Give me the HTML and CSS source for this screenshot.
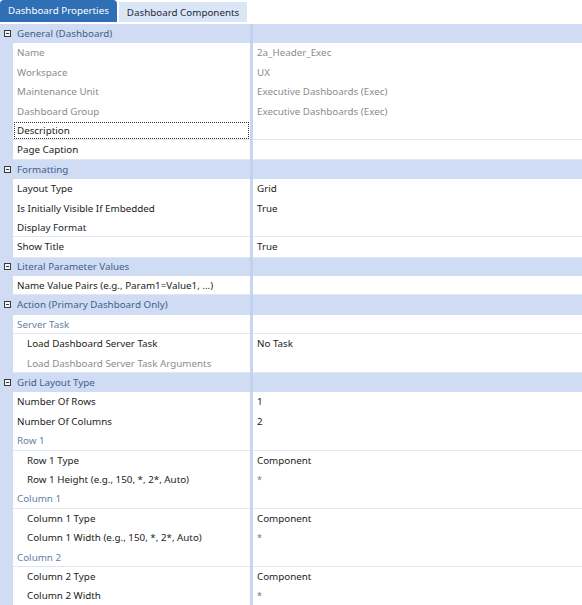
FILE: index.html
```html
<!DOCTYPE html>
<html lang="en">
<head>
    <meta charset="UTF-8">
    <meta name="viewport" content="width=device-width, initial-scale=1.0">
    <title>Dashboard Properties</title>
    <!-- STYLING -->
    <link rel="stylesheet" href="styles.css">
</head>
<body>
    <div class="tab-bar">
        <div class="tab active">Dashboard Properties</div>
        <div class="tab">Dashboard Components</div>
    </div>

    <div class="prop-grid">
        <!-- General -->
        <div class="cat"><span class="toggle"></span><span class="cat-name">General (Dashboard)</span><span class="split"></span><span></span></div>
        <div class="row ro"><span class="name">Name</span><span class="split"></span><span class="value">2a_Header_Exec</span></div>
        <div class="row ro"><span class="name">Workspace</span><span class="split"></span><span class="value">UX</span></div>
        <div class="row ro"><span class="name">Maintenance Unit</span><span class="split"></span><span class="value">Executive Dashboards (Exec)</span></div>
        <div class="row ro"><span class="name">Dashboard Group</span><span class="split"></span><span class="value">Executive Dashboards (Exec)</span></div>
        <div class="row"><span class="name focus">Description</span><span class="split"></span><span class="value"></span></div>
        <div class="row"><span class="name">Page Caption</span><span class="split"></span><span class="value"></span></div>

        <!-- Formatting -->
        <div class="cat"><span class="toggle"></span><span class="cat-name">Formatting</span><span class="split"></span><span></span></div>
        <div class="row"><span class="name">Layout Type</span><span class="split"></span><span class="value">Grid</span></div>
        <div class="row"><span class="name">Is Initially Visible If Embedded</span><span class="split"></span><span class="value">True</span></div>
        <div class="row"><span class="name">Display Format</span><span class="split"></span><span class="value"></span></div>
        <div class="row"><span class="name">Show Title</span><span class="split"></span><span class="value">True</span></div>

        <!-- Literal Parameter Values -->
        <div class="cat"><span class="toggle"></span><span class="cat-name">Literal Parameter Values</span><span class="split"></span><span></span></div>
        <div class="row"><span class="name">Name Value Pairs (e.g., Param1=Value1, ...)</span><span class="split"></span><span class="value"></span></div>

        <!-- Action -->
        <div class="cat"><span class="toggle"></span><span class="cat-name">Action (Primary Dashboard Only)</span><span class="split"></span><span></span></div>
        <div class="row sub"><span class="name">Server Task</span><span class="split"></span><span class="value"></span></div>
        <div class="row indent"><span class="name">Load Dashboard Server Task</span><span class="split"></span><span class="value">No Task</span></div>
        <div class="row indent ro"><span class="name">Load Dashboard Server Task Arguments</span><span class="split"></span><span class="value"></span></div>

        <!-- Grid Layout Type -->
        <div class="cat"><span class="toggle"></span><span class="cat-name">Grid Layout Type</span><span class="split"></span><span></span></div>
        <div class="row"><span class="name">Number Of Rows</span><span class="split"></span><span class="value">1</span></div>
        <div class="row"><span class="name">Number Of Columns</span><span class="split"></span><span class="value">2</span></div>
        <div class="row sub"><span class="name">Row 1</span><span class="split"></span><span class="value"></span></div>
        <div class="row indent"><span class="name">Row 1 Type</span><span class="split"></span><span class="value">Component</span></div>
        <div class="row indent"><span class="name">Row 1 Height (e.g., 150, *, 2*, Auto)</span><span class="split"></span><span class="value star">*</span></div>
        <div class="row sub"><span class="name">Column 1</span><span class="split"></span><span class="value"></span></div>
        <div class="row indent"><span class="name">Column 1 Type</span><span class="split"></span><span class="value">Component</span></div>
        <div class="row indent"><span class="name">Column 1 Width (e.g., 150, *, 2*, Auto)</span><span class="split"></span><span class="value star">*</span></div>
        <div class="row sub"><span class="name">Column 2</span><span class="split"></span><span class="value"></span></div>
        <div class="row indent"><span class="name">Column 2 Type</span><span class="split"></span><span class="value">Component</span></div>
        <div class="row indent"><span class="name">Column 2 Width</span><span class="split"></span><span class="value star">*</span></div>
    </div>
</body>
</html>
```

FILE: styles.css
```css
body {
    margin: 0;
    padding: 0;
    font-family: "Noto Sans", "Open Sans", sans-serif;
    font-size: 9.8px;
    color: #1c1c1c;
    background: #fff;
}

/* tabs */
.tab-bar {
    display: flex;
    align-items: flex-end;
    gap: 2px;
    height: 22px;
    margin-bottom: 2px;
}

.tab {
    height: 20px;
    line-height: 21px;
    padding: 0 8px;
    background-color: #dae5f6;
    color: #1e2a3a;
}

.tab.active {
    height: 22px;
    line-height: 22px;
    padding: 0 8px;
    background-color: #2f6fb5;
    color: #fff;
    border-radius: 4px 4px 0 0;
}

/* property grid */
.prop-grid {
    background-color: #cfdcf3;
}

.row,
.cat {
    display: grid;
    grid-template-columns: 13px 237px 3px 1fr;
    height: 19.4px;
    line-height: 18.4px;
}

.row .name,
.row .value,
.cat-name {
    padding-top: 1px;
}

.row .name {
    grid-column: 2;
    padding-left: 4px;
    background: #fff;
    border-bottom: 1px solid #dfe7f4;
    white-space: nowrap;
    overflow: hidden;
}

.row .value {
    padding-left: 4px;
    background: #fff;
    border-bottom: 1px solid #dfe7f4;
    white-space: nowrap;
}

.split {
    background-color: #c6d6f0;
}

.cat .split {
    background-color: #c2d2ee;
}

.cat-name {
    padding-left: 4px;
    color: #3f5f8c;
}

.toggle {
    position: relative;
    width: 7px;
    height: 7px;
    margin: 6px 0 0 4px;
    border: 1px solid #3a3a3a;
    box-sizing: border-box;
    background: #f4f7fc;
}

.toggle::after {
    content: "";
    position: absolute;
    left: 1px;
    right: 1px;
    top: 2px;
    height: 1px;
    background: #3a3a3a;
}

.row.ro .name,
.row.ro .value {
    color: #8c8c8c;
}

.row.sub .name {
    color: #6381a6;
}

.row.indent .name {
    padding-left: 14px;
}

.value.star {
    color: #777;
    font-size: 9px;
}

.name.focus {
    outline: 1px dotted #333;
    outline-offset: -2px;
}
```
